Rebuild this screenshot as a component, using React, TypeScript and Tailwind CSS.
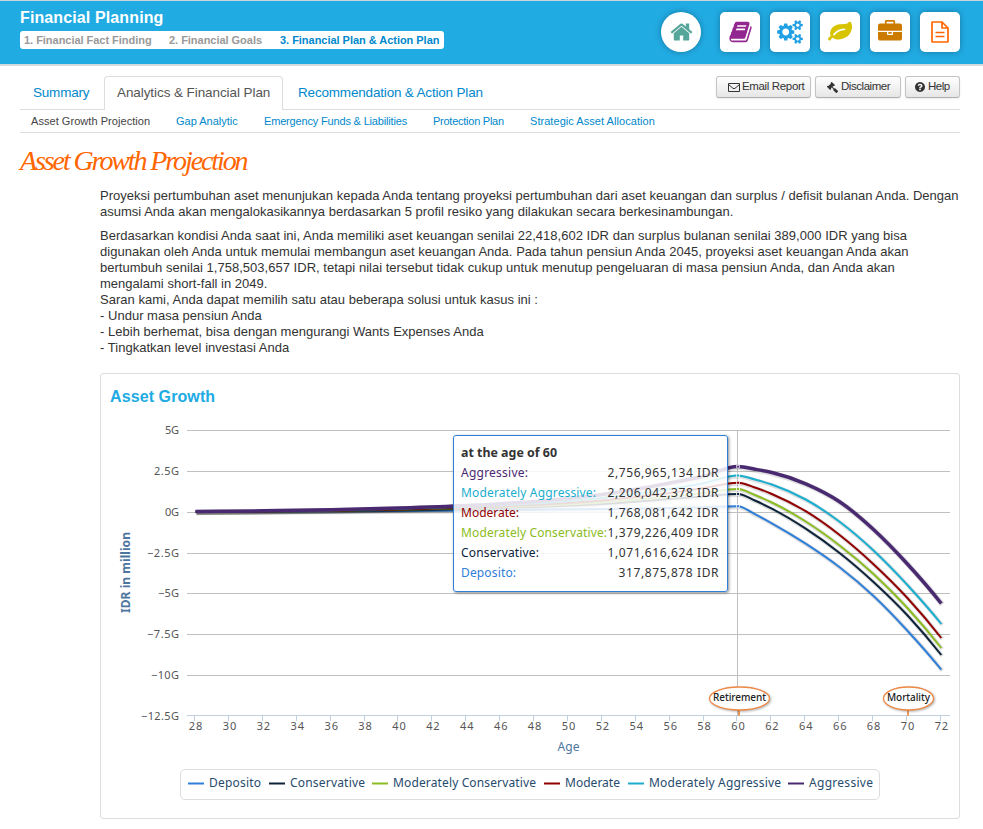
import { FaGavel } from "react-icons/fa";

const icons = {
  home: "M1408 992v480q0 26-19 45t-45 19h-384v-384h-256v384h-384q-26 0-45-19t-19-45v-480q0-1 .5-3t.5-3l575-474 575 474q1 2 1 6zm223-69l-62 74q-8 9-21 11h-3q-13 0-21-7l-692-577-692 577q-12 8-24 7-13-2-21-11l-62-74q-8-10-7-23.5t11-21.5l719-599q32-26 76-26t76 26l244 204v-195q0-14 9-23t23-9h192q14 0 23 9t9 23v408l219 182q10 8 11 21.5t-7 23.5z",
  book: "M1639 478q40 57 18 129l-275 906q-19 64-76.5 107.5t-122.5 43.5h-923q-77 0-148.5-53.5t-99.5-131.5q-24-67-2-127 0-4 3-27t4-37q1-8-3-21.5t-3-19.5q2-11 8-21t16.5-23.5 16.5-23.5q23-38 45-91.5t30-91.5q3-10 .5-30t-.5-28q3-11 17-28t17-23q21-36 42-92t25-90q1-9-2.5-32t.5-28q4-13 22-30.5t22-22.5q19-26 42.5-84.5t27.5-96.5q1-8-3-25.5t-2-26.5q2-8 9-18t18-23 17-21q8-12 16.5-30.5t15-35 16-36 19.5-32 26.5-23.5 36-11.5 47.5 5.5l-1 3q38-9 51-9h761q74 0 114 56t18 130l-274 906q-36 119-71.5 153.5t-128.5 34.5h-869q-27 0-38 15-11 16-1 43 24 70 144 70h923q29 0 56-15.5t35-41.5l300-987q7-22 5-57 38 15 59 43zm-1064 2q-4 13 2 22.5t20 9.5h608q13 0 25.5-9.5t16.5-22.5l21-64q4-13-2-22.5t-20-9.5h-608q-13 0-25.5 9.5t-16.5 22.5zm-83 256q-4 13 2 22.5t20 9.5h608q13 0 25.5-9.5t16.5-22.5l21-64q4-13-2-22.5t-20-9.5h-608q-13 0-25.5 9.5t-16.5 22.5z",
  cog: "M896 896q0-106-75-181t-181-75-181 75-75 181 75 181 181 75 181-75 75-181zm384-91v185q0 10-7 19.5t-16 10.5l-155 24q-11 35-32 76 34 48 90 115 7 11 7 20 0 12-7 19-23 30-82.5 89.5t-78.5 59.5q-11 0-21-7l-115-90q-37 19-77 31-11 108-23 155-7 24-30 24h-186q-11 0-20-7.5t-10-17.5l-23-153q-34-10-75-31l-118 89q-7 7-20 7-11 0-21-8-144-133-144-160 0-9 7-19 10-14 41-53t47-61q-23-44-35-82l-152-24q-10-1-17-9.5t-7-19.5v-185q0-10 7-19.5t16-10.5l155-24q11-35 32-76-34-48-90-115-7-11-7-20 0-12 7-20 22-30 82-89t79-59q11 0 21 7l115 90q34-18 77-32 11-108 23-154 7-24 30-24h186q11 0 20 7.5t10 17.5l23 153q34 10 75 31l118-89q8-7 20-7 11 0 21 8 144 133 144 160 0 8-7 19-12 16-42 54t-45 60q23 48 34 82l152 23q10 2 17 10.5t7 19.5z",
  smallCog: "M1664 1408q0-52-38-90t-90-38-90 38-38 90q0 53 37.500 90.500t90.500 37.500 90.500-37.500 37.500-90.500zm256-70v140q0 16-149 31-12 27-30 52 51 113 51 138 0 4-4 7-122 71-124 71-8 0-46-47t-52-68q-20 2-30 2t-30-2q-14 21-52 68t-46 47q-2 0-124-71-4-3-4-7 0-25 51-138-18-25-30-52-149-15-149-31v-140q0-16 149-31 13-29 30-52-51-113-51-138 0-4 4-7 4-2 35-20t59-34 30-16q8 0 46 46.500t52 67.500q20-2 30-2t30 2q51-71 92-112l6-2q4 0 124 70 4 3 4 7 0 25-51 138 17 23 30 52 149 15 149 31z",
  leaf: "M1280 704q0-26-19-45t-45-19q-172 0-318 49.500t-259.500 134-235.500 219.500q-19 21-19 45 0 26 19 45t45 19q24 0 45-19 27-24 74-71t67-66q137-124 268.500-176t313.500-52q26 0 45-19t19-45zm512-198q0 95-20 193-46 224-184.500 383t-357.500 268q-214 108-438 108-148 0-286-47-15-5-88-42t-96-37q-16 0-39.500 32t-45 70-52.500 70-60 32q-43 0-63.500-17.500t-45.500-59.500q-2-4-6-11t-5.500-10-3-9.500-1.500-13.500q0-35 31-73.500t68-65.500 68-56 31-48q0-4-14-38t-16-44q-9-51-9-104 0-115 43.500-220t119-184.500 170.500-139 204-95.500q55-18 145-25.500t179.500-9 178.500-6 163.500-24 113.500-56.500l29.500-29.500 29.500-28 27-20 36.500-16 43.500-4.500q39 0 70.500 46t47.500 112 24 124 8 96z",
  briefcase: "M640 256h512v-128h-512v128zm1152 640v480q0 66-47 113t-113 47h-1472q-66 0-113-47t-47-113v-480h672v160q0 26 19 45t45 19h320q26 0 45-19t19-45v-160h672zm-768 0v128h-256v-128h256zm768-480v384h-1792v-384q0-66 47-113t113-47h352v-160q0-40 28-68t68-28h576q40 0 68 28t28 68v160h352q66 0 113 47t47 113z",
  help: "M1024 1376v-192q0-14-9-23t-23-9h-192q-14 0-23 9t-9 23v192q0 14 9 23t23 9h192q14 0 23-9t9-23zm256-672q0-88-55.500-163t-138.500-116-170-41q-243 0-371 213-15 24 8 42l132 100q7 6 19 6 16 0 25-12 53-68 86-92 34-24 86-24 48 0 85.500 26t37.500 59q0 38-20 61t-68 45q-63 28-115.500 86.500t-52.500 125.500v36q0 14 9 23t23 9h192q14 0 23-9t9-23q0-19 21.500-49.500t54.500-49.500q32-18 49-28.500t46-35 44.500-48 28-60.500 12.500-81zm384 192q0 209-103 385.500t-279.500 279.500-385.500 103-385.500-103-279.500-279.500-103-385.500 103-385.500 279.500-279.500 385.500-103 385.500 103 279.500 279.500 103 385.500z",
};

const tile = "flex h-10 w-10 items-center justify-center rounded-[5px] bg-white shadow-[0_0_6px_rgba(0,0,0,0.3)]";
const button =
  "flex h-[22px] items-center rounded-[3px] border border-[#c4c4c4] border-b-[#b0b0b0] bg-gradient-to-b from-white to-[#e6e6e6] text-[11.5px] text-[#333] shadow-[0_1px_2px_rgba(0,0,0,0.08)] whitespace-nowrap";

const Header = () => (
  <header className="flex h-[66px] justify-between border-t border-b-2 border-t-[#c9d5da] border-b-[#d5dadd] bg-[#21abe3] pl-5 pr-[23px]">
    <div className="pt-[7px]">
      <h1 className="text-[16px] leading-5 font-bold tracking-[0.12px] text-white">Financial Planning</h1>
      <div className="mt-[3px] flex h-[18px] w-[424px] items-center rounded-[3px] bg-white pl-1 text-[11px] leading-4 font-bold tracking-[-0.03px] whitespace-nowrap text-[#999]">
        <span className="w-[145px]">1. Financial Fact Finding</span>
        <span className="w-[111px]">2. Financial Goals</span>
        <span className="text-[#0088cc]">3. Financial Plan &amp; Action Plan</span>
      </div>
    </div>
    <nav className="flex gap-2.5 pt-[11px]">
      <a className="mr-[9px] flex h-10 w-10 items-center justify-center rounded-full bg-white shadow-[0_0_6px_rgba(0,0,0,0.3)]">
        <svg className="h-6 w-[23px]" viewBox="0 0 1664 1792" fill="#56a69b"><path d={icons.home} /></svg>
      </a>
      <a className={tile}>
        <svg className="h-6 w-[23px]" viewBox="0 0 1664 1792" fill="#92278f"><path d={icons.book} /></svg>
      </a>
      <a className={tile}>
        <svg className="h-6 w-[26px]" viewBox="0 0 1920 1792" fill="#21a0e3">
          <path d={icons.cog} />
          <path d={icons.smallCog} />
          <path d={icons.smallCog} transform="translate(0 -1024)" />
        </svg>
      </a>
      <a className={tile}>
        <svg className="h-6 w-6" viewBox="0 0 1792 1792" fill="#d7c300"><path d={icons.leaf} /></svg>
      </a>
      <a className={tile}>
        <svg className="h-6 w-6" viewBox="0 0 1792 1792" fill="#cb7b00"><path d={icons.briefcase} /></svg>
      </a>
      <a className={tile}>
        <svg className="h-[22px] w-[18px]" viewBox="0 0 18 22" fill="none" stroke="#ff6600" strokeWidth="1.7">
          <path d="M11 1H1.500Q1 1 1 1.500v19q0 .5.500.500h15q.5 0 .5-.5V7L11 1V7h6M4.500 11.500h9M4.500 15.500h9" strokeLinejoin="round" />
        </svg>
      </a>
    </nav>
  </header>
);

const Tabs = () => (
  <div className="ml-5 w-[940px]">
    <div className="flex h-11 justify-between border-b border-[#ddd] pt-[10px]">
      <div className="flex text-[13.5px] leading-5 text-[#0088cc] whitespace-nowrap">
        <a className="w-[84px] pt-[7px] pl-[13px] tracking-[-0.2px]">Summary</a>
        <a className="h-[34px] w-[179px] rounded-t border border-b-0 border-[#ddd] bg-white pt-[6px] pl-3 tracking-[-0.08px] text-[#555]">Analytics &amp; Financial Plan</a>
        <a className="pt-[7px] pl-[15px] tracking-[-0.18px]">Recommendation &amp; Action Plan</a>
      </div>
      <div className="flex gap-1">
        <a className={`${button} w-[95px] pl-[11px]`}>
          <svg className="mr-0.5 h-[9px] w-3 shrink-0" viewBox="0 0 12 9" fill="none" stroke="#333"><path d="M.5.500h11v8H.5zM.5 1.500L5 5.300q1 .7 2 0l4.500-3.800" /></svg>
          <span className="tracking-[-0.35px]">Email Report</span>
        </a>
        <a className={`${button} w-[86px] pl-[11px]`}>
          <FaGavel className="mr-[3px] -scale-x-100 text-[11px]" />
          <span className="tracking-[-0.45px]">Disclaimer</span>
        </a>
        <a className={`${button} w-[55px] pl-[9px]`}>
          <svg className="mr-[3px] h-[10px] w-[10px]" viewBox="128 128 1536 1536" fill="#333"><path d={icons.help} /></svg>
          <span className="tracking-[-0.5px]">Help</span>
        </a>
      </div>
    </div>
    <div className="flex h-[23px] border-b border-[#ddd] pl-[11px] text-[11px] leading-[22px] whitespace-nowrap text-[#0088cc]">
      <a className="w-[145px] tracking-[0.05px] text-[#444]">Asset Growth Projection</a>
      <a className="w-[88px]">Gap Analytic</a>
      <a className="w-[169px] tracking-[-0.17px]">Emergency Funds &amp; Liabilities</a>
      <a className="w-[97px] tracking-[-0.25px]">Protection Plan</a>
      <a className="tracking-[0.05px]">Strategic Asset Allocation</a>
    </div>
  </div>
);

const Summary = () => (
  <div className="ml-[100px] w-[870px] text-[13px] leading-4 whitespace-nowrap tracking-[0.01px] text-[#333]">
    <p>
      Proyeksi pertumbuhan aset menunjukan kepada Anda tentang proyeksi pertumbuhan dari aset keuangan dan surplus / defisit bulanan Anda. Dengan<br />
      asumsi Anda akan mengalokasikannya berdasarkan 5 profil resiko yang dilakukan secara berkesinambungan.
    </p>
    <p className="mt-2 tracking-[0.02px]">
      Berdasarkan kondisi Anda saat ini, Anda memiliki aset keuangan senilai 22,418,602 IDR dan surplus bulanan senilai 389,000 IDR yang bisa<br />
      digunakan oleh Anda untuk memulai membangun aset keuangan Anda. Pada tahun pensiun Anda 2045, proyeksi aset keuangan Anda akan<br />
      bertumbuh senilai 1,758,503,657 IDR, tetapi nilai tersebut tidak cukup untuk menutup pengeluaran di masa pensiun Anda, dan Anda akan<br />
      mengalami short-fall in 2049.<br />
      Saran kami, Anda dapat memilih satu atau beberapa solusi untuk kasus ini :<br />
      - Undur masa pensiun Anda<br />
      - Lebih berhemat, bisa dengan mengurangi Wants Expenses Anda<br />
      - Tingkatkan level investasi Anda
    </p>
  </div>
);

type Point = [number, number];

const ages = [28, 32, 36, 40, 44, 48, 52, 56, 58, 60, 61, 62, 64, 66, 68, 70, 72];
const xOf = (age: number) => 195.5 + (age - 28) * 16.95;

const series = [
  { name: "Deposito", color: "#2f7ed8", width: 2, legend: "w-[81px]", label: 52, ys: [511.8, 511.6, 511.3, 510.9, 510.4, 509.8, 509, 508, 507.2, 506.3, 514.2, 523.3, 543.7, 567.3, 596, 630.7, 669.7] },
  { name: "Conservative", color: "#0d233a", width: 2, legend: "w-[103px]", label: 75, ys: [511.8, 511.4, 510.8, 510, 508.7, 507, 504, 499, 496.5, 494, 500.5, 508.7, 528.7, 553, 582, 615.3, 655] },
  { name: "Moderately Conservative", color: "#8bbc21", width: 2, legend: "w-[172px]", label: 143, ys: [511.8, 511.3, 510.7, 509.8, 508.3, 506, 502.5, 496.5, 493, 489, 495, 502.5, 521.5, 545.5, 574, 608, 648] },
  { name: "Moderate", color: "#910000", width: 2, legend: "w-[84px]", label: 55, ys: [511.8, 511.2, 510.5, 509.4, 507.6, 504.8, 500.5, 493, 488, 482.7, 487.5, 494, 511.2, 535, 564.2, 598, 638] },
  { name: "Moderately Aggressive", color: "#1aadce", width: 2, legend: "w-[160px]", label: 132, ys: [511.8, 511, 510.2, 508.8, 506.7, 503.5, 498, 489, 483, 475.5, 479.5, 484.5, 499.5, 521.8, 550.5, 585, 624] },
  { name: "Aggressive", color: "#492970", width: 3.5, legend: "w-[84px]", label: 64, ys: [511.5, 510.8, 509.7, 508, 505.5, 501.5, 494.5, 483, 476, 466.6, 469.2, 472.5, 483.8, 501.7, 529.5, 564, 603.5] },
];

// spline through the points; the retirement peak is kept flat
const spline = (ys: number[]) => {
  const pts: Point[] = ys.map((y, i) => [xOf(ages[i]), y]);
  const last = pts.length - 1;
  const chord = (i: number) => (pts[i + 1][1] - pts[i][1]) / (pts[i + 1][0] - pts[i][0]);
  const slope = (i: number) => {
    if (ages[i] === 60) return 0;
    if (i === 0) return chord(0);
    if (i === last) return chord(last - 1) + 0.1;
    const before = pts[i][0] - pts[i - 1][0];
    const after = pts[i + 1][0] - pts[i][0];
    return (chord(i - 1) * after + chord(i) * before) / (before + after);
  };
  let d = `M${pts[0][0]} ${pts[0][1]}`;
  for (let i = 1; i < pts.length; i++) {
    const [x0, y0] = pts[i - 1];
    const [x1, y1] = pts[i];
    const h = (x1 - x0) / 3;
    d += `C${x0 + h} ${y0 + slope(i - 1) * h} ${x1 - h} ${y1 - slope(i) * h} ${x1} ${y1}`;
  }
  return d;
};

const yAxis: [string, number, number][] = [
  ["5G", 430.5, 14], ["2.5G", 471.5, 25], ["0G", 512.5, 14], ["−2.5G", 553.5, 32],
  ["−5G", 593.5, 21], ["−7.5G", 634.5, 32], ["−10G", 675.5, 28], ["−12.5G", 716.5, 38],
];

const Flag = ({ x, label, width, rx }: { x: number; label: string; width: number; rx: number }) => (
  <g>
    <path d={`M${x + 1} 710v6`} stroke="#ee9a5c" strokeWidth="2" />
    <ellipse cx={x + 1.500} cy="698.5" rx={rx} ry="11.500" fill="white" stroke="#ee8844" strokeWidth="1.3" className="drop-shadow-[1px_1px_1px_rgba(0,0,0,0.3)]" />
    <text x={x + 1.500} y="701" textAnchor="middle" fontSize="10" fontWeight="500" fill="#222" textLength={width}>{label}</text>
  </g>
);

const Plot = () => (
  <svg className="block h-[345px] w-[858px] font-['Noto_Sans',sans-serif]" viewBox="101 415 858 345">
    {yAxis.map(([label, y, w]) => (
      <g key={label}>
        {label !== "−12.5G" && <path d={`M187 ${y}H950`} stroke="#c0c0c0" />}
        <text x="179" y={y + 3.500} textAnchor="end" fontSize="11" fill="#555" textLength={w}>{label}</text>
      </g>
    ))}
    <path d="M187 715.500H950" stroke="#c0d0e0" />
    {Array.from({ length: 23 }, (_, i) => 28 + i * 2).map((age) => (
      <g key={age}>
        <path d={`M${Math.floor(xOf(age)) - 0.5} 716v5`} stroke="#c0d0e0" />
        <text x={xOf(age) + 0.1} y="730" textAnchor="middle" fontSize="11" fill="#555" textLength="13.500">{age}</text>
      </g>
    ))}
    <path d="M737.500 430V716" stroke="#c0c0c0" />
    {series.map((s) => (
      <g key={s.name} fill="none">
        <path d={spline(s.ys)} stroke="black" strokeOpacity="0.12" strokeWidth={s.width + 2} transform="translate(1 1)" />
        <path d={spline(s.ys)} stroke={s.color} strokeWidth={s.width} />
        <circle cx="738" cy={s.ys[9]} r="2" fill="white" />
        <circle cx="738" cy={s.ys[9]} r="1.200" fill={s.color} />
      </g>
    ))}
    <Flag x={738} label="Retirement" width={53} rx={30} />
    <Flag x={907} label="Mortality" width={43} rx={25} />
    <text transform="translate(130 613) rotate(-90)" fontSize="12" fontWeight="bold" fill="#4d759e" textLength="81">IDR in million</text>
    <text x="557.500" y="751" fontSize="12" fill="#4d759e" textLength="22">Age</text>
  </svg>
);

const values: [string, string, string, number, number][] = [
  ["Aggressive:", "2,756,965,134 IDR", "#492970", 67, 111],
  ["Moderately Aggressive:", "2,206,042,378 IDR", "#1aadce", 135, 111],
  ["Moderate:", "1,768,081,642 IDR", "#910000", 58, 111],
  ["Moderately Conservative:", "1,379,226,409 IDR", "#8bbc21", 146, 111],
  ["Conservative:", "1,071,616,624 IDR", "#0d233a", 78, 111],
  ["Deposito:", "317,875,878 IDR", "#2f7ed8", 55, 100],
];

const Tooltip = () => (
  <div className="absolute top-[61px] left-[352px] h-[157px] w-[275px] rounded-[3px] border border-[#2f7ed8] bg-white/85 shadow-[1px_1px_3px_rgba(0,0,0,0.45)]">
    <svg className="block h-[155px] w-[273px] font-['Noto_Sans',sans-serif] text-[12px]" viewBox="0 0 273 155">
      <text x="7" y="21" fontWeight="bold" fill="#333" textLength="96" lengthAdjust="spacingAndGlyphs">at the age of 60</text>
      {values.map(([label, value, color, w, vw], i) => (
        <g key={label}>
          <text x="7" y={41 + i * 20} fill={color} textLength={w}>{label}</text>
          <text x={264.500 - vw} y={41 + i * 20} fill="#333" textLength={vw}>{value}</text>
        </g>
      ))}
    </svg>
  </div>
);

const Legend = () => (
  <div className="ml-[79px] flex h-[31px] w-[700px] items-start rounded-[5px] border border-[#ddd] pt-[5px] pl-[7px]">
    {series.map((s) => (
      <div key={s.name} className={`${s.legend} shrink-0`}>
        <svg className="block h-4 w-full overflow-visible font-['Noto_Sans',sans-serif] text-[12px]">
          <path d="M0 8.500h16" stroke={s.color} strokeWidth="2" />
          <text x="21" y="12" fill="#274b6d" textLength={s.label}>{s.name}</text>
        </svg>
      </div>
    ))}
  </div>
);

const App = () => (
  <div className="h-[829px] w-[983px] overflow-hidden bg-white font-['Liberation_Sans',Arial,sans-serif]">
    <Header />
    <Tabs />
    <h2 className="mt-[7px] ml-5 h-[48px] font-['Liberation_Serif',serif] text-[28px] leading-[42px] tracking-[-2.1px] whitespace-nowrap text-[#ff6600] italic">Asset Growth Projection</h2>
    <Summary />
    <section className="relative mt-[17px] ml-[100px] h-[446px] w-[860px] rounded-[3px] border border-[#ddd]">
      <h3 className="h-[41px] pt-[13px] pl-[9px] text-[16px] leading-5 font-bold tracking-[0.1px] text-[#21abe3]">Asset Growth</h3>
      <Plot />
      <div className="h-[9px]" />
      <Legend />
      <Tooltip />
    </section>
  </div>
);

export default App;
